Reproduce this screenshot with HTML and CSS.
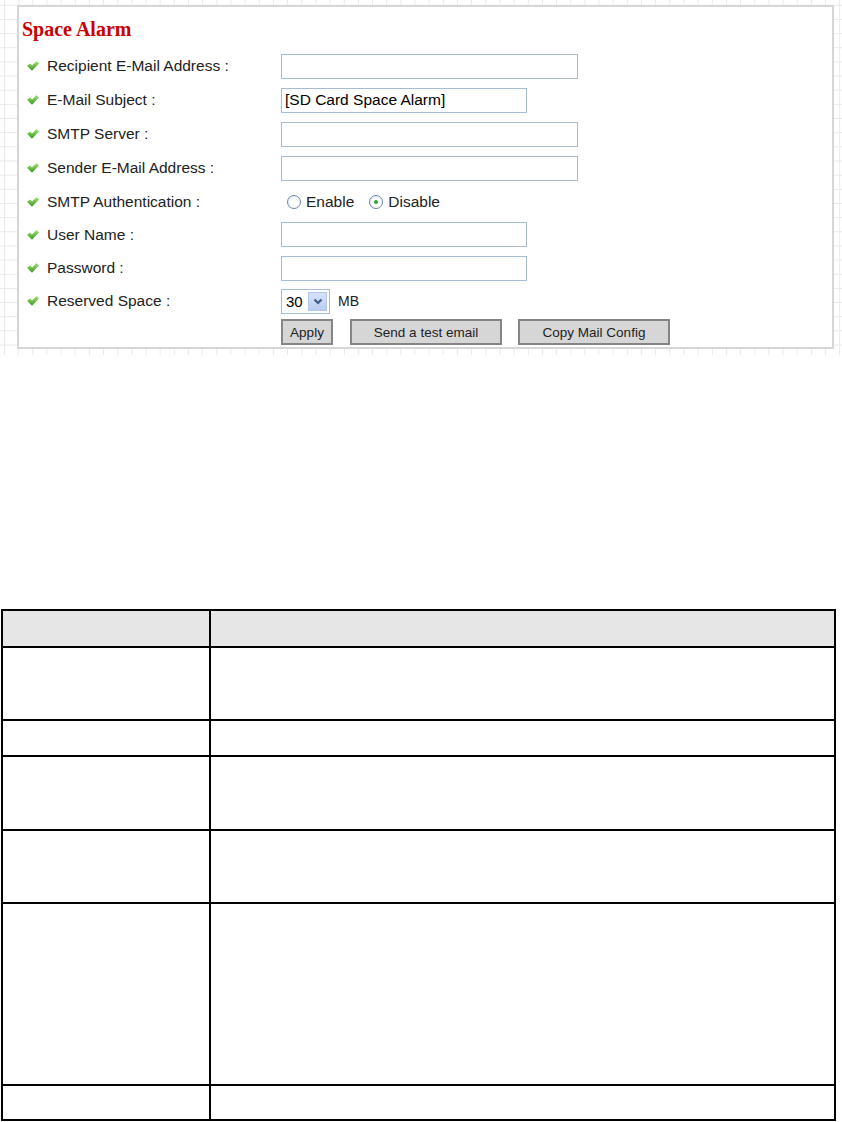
FILE: index.html
```html
<!DOCTYPE html>
<html>
<head>
<meta charset="utf-8">
<title>Space Alarm</title>
<link rel="stylesheet" href="styles.css">
</head>
<body>
<div class="shot">
  <div class="panel">
    <h1 class="title">Space Alarm</h1>
    <div class="form">
      <div class="row">
        <div class="label"><svg class="tick" viewBox="0 0 12 10"><defs><linearGradient id="g" x1="0" y1="0" x2="0" y2="1"><stop offset="0" stop-color="#a6e67a"/><stop offset="1" stop-color="#37961a"/></linearGradient></defs><polygon points="0,4.8 3,2.4 5,4.4 9.4,0 12,2.4 5,9.8" fill="url(#g)"/></svg><span>Recipient E-Mail Address :</span></div>
        <input class="text long" type="text">
      </div>
      <div class="row">
        <div class="label"><svg class="tick" viewBox="0 0 12 10"><polygon points="0,4.8 3,2.4 5,4.4 9.4,0 12,2.4 5,9.8" fill="url(#g)"/></svg><span>E-Mail Subject :</span></div>
        <input class="text short" type="text" value="[SD Card Space Alarm]">
      </div>
      <div class="row">
        <div class="label"><svg class="tick" viewBox="0 0 12 10"><polygon points="0,4.8 3,2.4 5,4.4 9.4,0 12,2.4 5,9.8" fill="url(#g)"/></svg><span>SMTP Server :</span></div>
        <input class="text long" type="text">
      </div>
      <div class="row">
        <div class="label"><svg class="tick" viewBox="0 0 12 10"><polygon points="0,4.8 3,2.4 5,4.4 9.4,0 12,2.4 5,9.8" fill="url(#g)"/></svg><span>Sender E-Mail Address :</span></div>
        <input class="text long" type="text">
      </div>
      <div class="row row-33">
        <div class="label"><svg class="tick" viewBox="0 0 12 10"><polygon points="0,4.8 3,2.4 5,4.4 9.4,0 12,2.4 5,9.8" fill="url(#g)"/></svg><span>SMTP Authentication :</span></div>
        <div class="radios">
          <span class="radio"></span><span class="rlabel">Enable</span>
          <span class="radio checked"></span><span class="rlabel">Disable</span>
        </div>
      </div>
      <div class="row row-33">
        <div class="label"><svg class="tick" viewBox="0 0 12 10"><polygon points="0,4.8 3,2.4 5,4.4 9.4,0 12,2.4 5,9.8" fill="url(#g)"/></svg><span>User Name :</span></div>
        <input class="text short" type="text">
      </div>
      <div class="row">
        <div class="label"><svg class="tick" viewBox="0 0 12 10"><polygon points="0,4.8 3,2.4 5,4.4 9.4,0 12,2.4 5,9.8" fill="url(#g)"/></svg><span>Password :</span></div>
        <input class="text short" type="password">
      </div>
      <div class="row row-32">
        <div class="label"><svg class="tick" viewBox="0 0 12 10"><polygon points="0,4.8 3,2.4 5,4.4 9.4,0 12,2.4 5,9.8" fill="url(#g)"/></svg><span>Reserved Space :</span></div>
        <div class="select"><span class="sel-val">30</span><span class="drop"><svg viewBox="0 0 10 7" class="chev"><polyline points="1.5,1.5 5,5 8.5,1.5" fill="none" stroke="#3d5a8a" stroke-width="2.2"/></svg></span></div>
        <span class="unit">MB</span>
      </div>
      <div class="row row-btn">
        <div class="label"></div>
        <div class="buttons">
          <button class="btn btn-apply">Apply</button>
          <button class="btn btn-wide">Send a test email</button>
          <button class="btn btn-wide">Copy Mail Config</button>
        </div>
      </div>
    </div>
  </div>
</div>

<table class="desc">
  <tr class="head"><td class="c1 h-head"></td><td class="c2"></td></tr>
  <tr><td class="c1 h-2"></td><td class="c2"></td></tr>
  <tr><td class="c1 h-1"></td><td class="c2"></td></tr>
  <tr><td class="c1 h-2b"></td><td class="c2"></td></tr>
  <tr><td class="c1 h-2"></td><td class="c2"></td></tr>
  <tr><td class="c1 h-6"></td><td class="c2"></td></tr>
  <tr><td class="c1 h-last"></td><td class="c2"></td></tr>
</table>
</body>
</html>
```

FILE: styles.css
```css
html, body {
  margin: 0;
  padding: 0;
  background: #fff;
}

body {
  font-family: "Liberation Sans", Arial, sans-serif;
  color: #222;
}

.shot {
  height: 355px;
  box-sizing: border-box;
  padding: 5px 0 0 17px;
  background-color: #fff;
  background-image:
    linear-gradient(to right, #e9e9e9 1px, transparent 1px),
    linear-gradient(to bottom, #e9e9e9 1px, transparent 1px);
  background-size: 14.17px 14.17px;
  background-position: 4px 4.8px;
}

.panel {
  width: 817px;
  height: 344px;
  box-sizing: border-box;
  background: #fff;
  border: 2px solid #d6d6d6;
}

.title {
  margin: 0;
  padding: 10px 0 0 3px;
  height: 24px;
  line-height: 24px;
  font-family: "Liberation Serif", "Times New Roman", serif;
  font-size: 20px;
  font-weight: bold;
  color: #cc0000;
}

.form {
  margin-top: 8px;
}

.row {
  display: flex;
  align-items: center;
  height: 34px;
}

.row-33 { height: 33px; }
.row-32 { height: 32px; }
.row-btn { height: 30px; }

.label {
  width: 254px;
  flex: none;
  display: flex;
  align-items: center;
  padding-left: 8px;
  font-size: 15.5px;
  color: #222;
}

.tick {
  width: 12px;
  height: 10px;
  margin-right: 8px;
  flex: none;
}

.text {
  height: 25px;
  box-sizing: border-box;
  border: 1px solid #a7bbd3;
  padding: 0 3px;
  margin: 0;
  font-family: "Liberation Sans", Arial, sans-serif;
  font-size: 15.5px;
  color: #000;
  background: #fff;
  outline: none;
}

.long { width: 297px; }
.short { width: 246px; }

.radios {
  display: flex;
  align-items: center;
  padding-left: 6px;
  font-size: 15.5px;
  color: #222;
}

.radio {
  width: 14px;
  height: 14px;
  box-sizing: border-box;
  border-radius: 50%;
  border: 1px solid #6786ad;
  background: radial-gradient(circle at 60% 60%, #ffffff 40%, #dfe5ee 100%);
  position: relative;
  flex: none;
}

.radio.checked::after {
  content: "";
  position: absolute;
  left: 4px;
  top: 4px;
  width: 4px;
  height: 4px;
  border-radius: 50%;
  background: #2fa62f;
}

.rlabel {
  margin-left: 5px;
  margin-right: 15px;
}

.select {
  width: 49px;
  height: 25px;
  box-sizing: border-box;
  border: 1px solid #a7bbd3;
  display: flex;
  align-items: center;
  justify-content: space-between;
  padding: 2px;
  background: #fff;
}

.sel-val {
  font-size: 15px;
  color: #000;
  padding-left: 2px;
}

.drop {
  width: 19px;
  height: 19px;
  box-sizing: border-box;
  background: linear-gradient(#d7e3fb, #b9cdf2);
  border: 1px solid #b4c6ea;
  display: flex;
  align-items: center;
  justify-content: center;
}

.chev {
  width: 10px;
  height: 7px;
}

.unit {
  margin-left: 8px;
  font-size: 14px;
  color: #222;
}

.buttons {
  display: flex;
  align-items: center;
}

.btn {
  height: 26px;
  box-sizing: border-box;
  border: 2px solid #858585;
  background: #d6d6d6;
  font-family: "Liberation Sans", Arial, sans-serif;
  font-size: 13.5px;
  color: #222;
  padding: 0;
  margin: 0;
}

.btn-apply { width: 52px; margin-right: 17px; }
.btn-wide { width: 152px; margin-right: 16px; }

.desc {
  margin-top: 254px;
  margin-left: 1px;
  width: 835px;
  border-collapse: collapse;
}

.desc td {
  border: 2px solid #000;
  padding: 0;
}

.desc .c1 { width: 206px; }

.desc .head td { background: #e6e6e6; }

.h-head { height: 35px; }
.h-2 { height: 71px; }
.h-2b { height: 72px; }
.h-1 { height: 34px; }
.h-6 { height: 180px; }
.h-last { height: 33px; }
```
